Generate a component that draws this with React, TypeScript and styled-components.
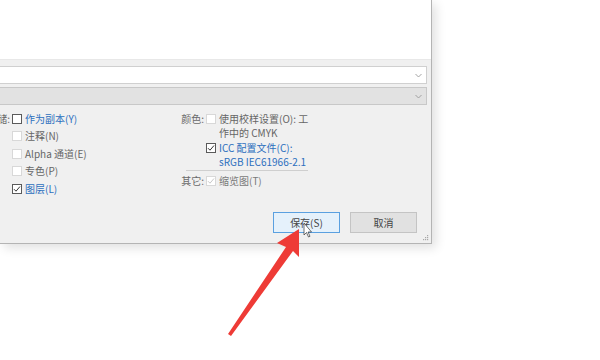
import React from 'react'
import styled, { createGlobalStyle } from 'styled-components';

const Global = createGlobalStyle`
    body {
        margin : 0;
        background : #ffffff;
        font-family : "Noto Sans CJK SC", "Noto Sans", sans-serif;
        overflow : hidden;
    }
`;

const Page = styled.div `
    position : relative;
    width : 600px;
    height : 360px;
    background : #ffffff;
`;

const Dialog = styled.div `
    width : 431px;
    height : 243px;
    display : flex;
    flex-direction : column;
    border-right : 1px solid #b4b4b4;
    border-bottom : 1px solid #b4b4b4;
    box-shadow : 4px 4px 10px rgba(0, 0, 0, 0.12);
    background : #f0f0f0;
`;

const Preview = styled.div `
    height : 59px;
    background : #ffffff;
    border-bottom : 1px solid #e8e8e8;
`;

const Body = styled.div `
    flex : 1;
    display : flex;
    flex-direction : column;
    padding : 6px 4px 0 0;
    position : relative;
`;

const Combo = styled.div<{ $gray?: boolean }> `
    height : 16px;
    margin-left : -2px;
    border : 1px solid ${p => p.$gray ? '#c8c8c8' : '#d0d0d0'};
    background : ${p => p.$gray ? '#e2e2e2' : '#ffffff'};
    display : flex;
    align-items : center;
    justify-content : flex-end;
    padding-right : 4px;
    margin-bottom : 3px;
`;

const Options = styled.div `
    display : flex;
    margin-top : 4px;
`;

const Column = styled.div<{ $w?: number }> `
    width : ${p => p.$w ? p.$w + 'px' : 'auto'};
    display : flex;
    flex-direction : column;
`;

const Row = styled.div<{ $h?: number }> `
    display : grid;
    grid-template-columns : var(--lab) 10px auto;
    column-gap : 2px;
    align-items : start;
    min-height : ${p => p.$h ?? 17.4}px;
    font-size : 10px;
    line-height : 14px;
`;

const Label = styled.span `
    color : #6a6a6a;
    display : flex;
    justify-content : flex-end;
    white-space : nowrap;
`;

const Text = styled.span<{ $tone?: 'blue' | 'dim' | 'normal' }> `
    color : ${p => p.$tone === 'blue' ? '#2c6fbe' : p.$tone === 'dim' ? '#7a7a7a' : '#666666'};
    white-space : nowrap;
    padding-left : 1px;
`;

const Box = styled.span<{ $disabled?: boolean }> `
    width : 10px;
    height : 10px;
    box-sizing : border-box;
    margin-top : 2px;
    border : 1px solid ${p => p.$disabled ? '#d8d8d8' : '#5a5a5a'};
    background : #ffffff;
    display : flex;
    align-items : center;
    justify-content : center;
`;

const Separator = styled.div `
    height : 1px;
    background : #cfcfcf;
    width : 122px;
    margin : 0 0 3px 6px;
`;

const Buttons = styled.div `
    display : flex;
    justify-content : flex-end;
    gap : 10px;
    padding-right : 10px;
    margin-top : auto;
    margin-bottom : 10px;
`;

const Button = styled.div<{ $primary?: boolean }> `
    width : 65px;
    height : 19px;
    border : 1px solid ${p => p.$primary ? '#5aa0e0' : '#c4c4c4'};
    background : ${p => p.$primary ? '#e5f1fb' : '#e1e1e1'};
    font-size : 10px;
    color : #444444;
    display : flex;
    align-items : center;
    justify-content : center;
`;

const Grip = styled.svg `
    position : absolute;
    right : 2px;
    bottom : 2px;
`;

const Overlay = styled.svg `
    position : absolute;
    left : 0;
    top : 0;
    pointer-events : none;
`;

function Chevron() {
    return (
        <svg width="7" height="5" viewBox="0 0 7 5">
            <path d="M0.5 1 L3.5 4 L6.5 1" fill="none" stroke="#9a9a9a" strokeWidth="0.9" />
        </svg>
    )
}

function Check({ checked, disabled } : { checked?: boolean, disabled?: boolean }) {
    return (
        <Box $disabled={disabled}>
            {checked && (
                <svg width="8" height="8" viewBox="0 0 8 8">
                    <path d="M1 4.2 L3 6.2 L7 1.5" fill="none" stroke={disabled ? '#c8c8c8' : '#333'} strokeWidth="1" />
                </svg>
            )}
        </Box>
    )
}

export default function App() {
    return (
        <Page>
            <Global />
            <Dialog>
                <Preview />
                <Body>
                    <Combo><Chevron /></Combo>
                    <Combo $gray><Chevron /></Combo>
                    <Options>
                        <Column $w={180} style={{ ['--lab' as string]: '10px' }}>
                            <Row><Label>存储:</Label><Check /><Text $tone="blue">作为副本(Y)</Text></Row>
                            <Row><span /><Check disabled /><Text>注释(N)</Text></Row>
                            <Row><span /><Check disabled /><Text>Alpha 通道(E)</Text></Row>
                            <Row><span /><Check disabled /><Text>专色(P)</Text></Row>
                            <Row><span /><Check checked /><Text $tone="blue">图层(L)</Text></Row>
                        </Column>
                        <Column style={{ ['--lab' as string]: '24px' }}>
                            <Row $h={29}><Label>颜色:</Label><Check disabled /><Text>使用校样设置(O): 工<br />作中的 CMYK</Text></Row>
                            <Row $h={29}><span /><Check checked /><Text $tone="blue">ICC 配置文件(C):<br />sRGB IEC61966-2.1</Text></Row>
                            <Separator />
                            <Row><Label>其它:</Label><Check checked disabled /><Text $tone="dim">缩览图(T)</Text></Row>
                        </Column>
                    </Options>
                    <Buttons>
                        <Button $primary>保存(S)</Button>
                        <Button>取消</Button>
                    </Buttons>
                    <Grip width="6" height="6" viewBox="0 0 6 6">
                        <rect x="4" y="0" width="1.2" height="1.2" fill="#a8a8a8" />
                        <rect x="2" y="2" width="1.2" height="1.2" fill="#a8a8a8" />
                        <rect x="4" y="2" width="1.2" height="1.2" fill="#a8a8a8" />
                        <rect x="0" y="4" width="1.2" height="1.2" fill="#a8a8a8" />
                        <rect x="2" y="4" width="1.2" height="1.2" fill="#a8a8a8" />
                        <rect x="4" y="4" width="1.2" height="1.2" fill="#a8a8a8" />
                    </Grip>
                </Body>
            </Dialog>
            <Overlay width="600" height="360" viewBox="0 0 600 360">
                <path d="M304 223 L304 235 L306.5 232.5 L308.5 237 L310 236.3 L308 232 L311.5 232 Z" fill="#ffffff" stroke="#333" strokeWidth="0.7" />
                <path d="M299 229 L277 243 L286 247 L228 334 L231 336 L293 251 L299 257 Z" fill="#ee3b36" />
            </Overlay>
        </Page>
    )
}
